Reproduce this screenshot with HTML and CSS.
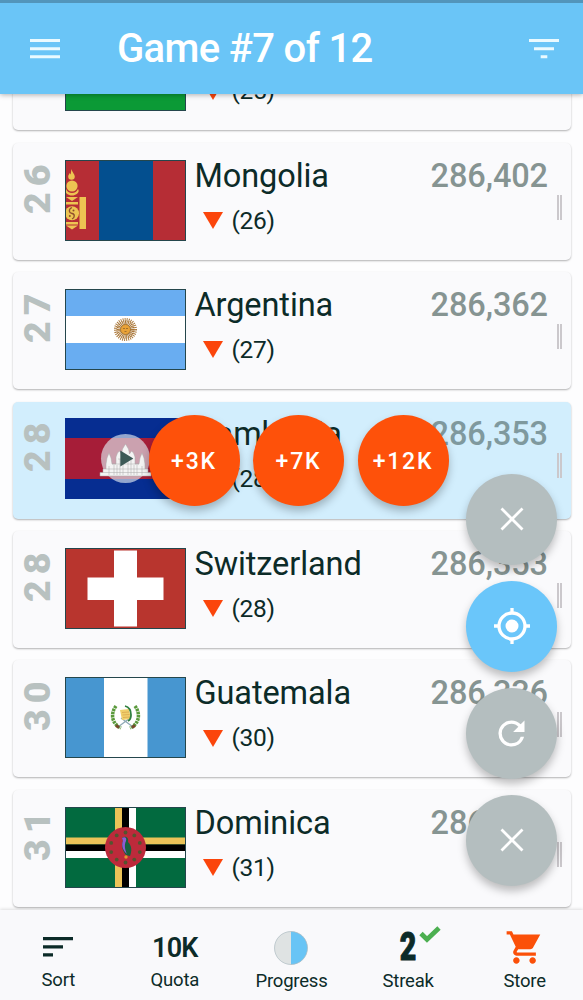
FILE: index.html
```
<!DOCTYPE html>
<html lang="en">
<head>
    <meta charset="UTF-8">
    <meta name="viewport" content="width=device-width, initial-scale=1.0">
    <title>Game #7 of 12</title>
    <link rel="stylesheet" href="styles.css">
</head>
<body>
    <header class="topbar">
        <svg class="menu-icon" viewBox="0 0 30 20" fill="#eafaff">
            <path d="M0 0h30v3H0zM0 8.2h30v3H0zM0 16.3h30v3H0z"></path>
        </svg>
        <h1 class="title">Game #7 of 12</h1>
        <svg class="filter-icon" viewBox="0 0 30 20" fill="#eafaff">
            <path d="M0 0h30v3H0zM5 8.2h20v3H5zM11.7 16.3h6.6v3h-6.6z"></path>
        </svg>
    </header>

    <main class="list">
        <div class="card">
            <div class="rank"></div>
            <svg class="flag" viewBox="0 0 121 81">
                <rect width="121" height="81" fill="#0b9a36"></rect>
                <rect class="frame" x=".5" y=".5" width="120" height="80"></rect>
            </svg>
            <div class="info">
                <div class="name"></div>
                <div class="change"><span class="down"></span>(25)</div>
            </div>
        </div>

        <div class="card">
            <div class="rank">26</div>
            <svg class="flag" viewBox="0 0 121 81">
                <rect width="121" height="81" fill="#b62d35"></rect>
                <rect x="34" width="54" height="81" fill="#034f8f"></rect>
                <!-- soyombo -->
                <g fill="#edc452">
                    <path d="M6.500 9c.3 3 3.300 5 3.300 7.500a3.300 3.300 0 0 1-6.600 0c0-1.500 1-2 1.400-3.500l1 1.500z"></path>
                    <circle cx="7" cy="26" r="5.600"></circle>
                    <path d="M1 29a6.500 6.500 0 0 0 12 0c2 3-1 6-6 6.500-5-.5-8-3.500-6-6.500z"></path>
                    <path d="M1 37h12l-6 4zM1 42h12v2.500H1zM1 62h12v2.500H1zM1 65.500h12l-6 4z"></path>
                    <circle cx="7" cy="53.300" r="7"></circle>
                    <path d="M14.500 37H21v32h-6.500z"></path>
                </g>
                <path d="M7 47.500c-4 2-3 5.500 0 6s3 4 0 5.500" fill="none" stroke="#8d4c2d" stroke-width="1.300"></path>
                <circle cx="8.500" cy="50.500" r="1" fill="#8d4c2d"></circle>
                <circle cx="4.800" cy="56" r="1" fill="#8d4c2d"></circle>
                <rect class="frame" x=".5" y=".5" width="120" height="80"></rect>
            </svg>
            <div class="info">
                <div class="name">Mongolia</div>
                <div class="change"><span class="down"></span>(26)</div>
            </div>
            <div class="score">286,402</div>
            <div class="handle"></div>
        </div>

        <div class="card">
            <div class="rank">27</div>
            <svg class="flag" viewBox="0 0 121 81">
                <rect width="121" height="81" fill="#69adf1"></rect>
                <rect y="27" width="121" height="27" fill="#fff"></rect>
                <!-- sun of May -->
                <circle cx="60.500" cy="40.500" r="6.500" fill="none" stroke="#a87434" stroke-width="5" stroke-dasharray=".9 .5"></circle>
                <circle cx="60.500" cy="40.500" r="10" fill="none" stroke="#a87434" stroke-width="3" stroke-dasharray=".9 1.100"></circle>
                <circle cx="60.500" cy="40.500" r="5" fill="#e9a238" stroke="#91652a" stroke-width=".7"></circle>
                <path d="M58 39.500h2m1 0h2M59.500 42.500h2" stroke="#91652a" stroke-width=".8"></path>
                <rect class="frame" x=".5" y=".5" width="120" height="80"></rect>
            </svg>
            <div class="info">
                <div class="name">Argentina</div>
                <div class="change"><span class="down"></span>(27)</div>
            </div>
            <div class="score">286,362</div>
            <div class="handle"></div>
        </div>

        <div class="card current">
            <div class="rank">28</div>
            <svg class="flag" viewBox="0 0 121 81">
                <rect width="121" height="81" fill="#062d91"></rect>
                <rect y="20" width="121" height="41" fill="#a61d38"></rect>
                <circle cx="60.500" cy="40.500" r="24.500" fill="#dfe8ef" fill-opacity=".65"></circle>
                <!-- Angkor Wat -->
                <path d="M35 58v-3.500h3V51h3v-5l1-6 2-5 2 5 1 6h4v-7l1.500-4 2-2 2 3 1-5 3-5 3 5 1 5 2-3 2 2 1.500 4v7h4l1-6 2-5 2 5 1 6v5h3v3.500h3V58z" fill="#f4f4f4" stroke="#aaa" stroke-width=".5"></path>
                <path d="M38 54.500h45M41 51h39M47 46h27M53 41h15M44 57v-9M49 57V47M52 57V47M55 57V41M58 57V38M63 57V38M66 57V41M69 57V47M72 57V47M77 57v-9" stroke="#aaa" stroke-width=".5" fill="none"></path>
                <path d="M55.300 32.500v16l13-8z" fill="#3d5a57"></path>
            </svg>
            <div class="info">
                <div class="name">Cambodia</div>
                <div class="change"><span class="down"></span>(28)</div>
            </div>
            <div class="score">286,353</div>
            <div class="handle"></div>
        </div>

        <div class="card">
            <div class="rank">28</div>
            <svg class="flag" viewBox="0 0 121 81">
                <rect width="121" height="81" fill="#b8352e"></rect>
                <path d="M49 2.500h23v27h26.500V52H72v26.500H49V52H22.500V29.500H49z" fill="#fff"></path>
                <rect class="frame" x=".5" y=".5" width="120" height="80"></rect>
            </svg>
            <div class="info">
                <div class="name">Switzerland</div>
                <div class="change"><span class="down"></span>(28)</div>
            </div>
            <div class="score">286,353</div>
            <div class="handle"></div>
        </div>

        <div class="card">
            <div class="rank">30</div>
            <svg class="flag" viewBox="0 0 121 81">
                <rect width="121" height="81" fill="#4796d0"></rect>
                <rect x="39" width="43.500" height="81" fill="#fff"></rect>
                <!-- wreath, rifles, scroll, quetzal -->
                <path d="M51 29c-6 8-4 18 5 22M70 29c6 8 4 18-5 22" fill="none" stroke="#5a9a3c" stroke-width="3.500" stroke-dasharray="2.500 .7"></path>
                <path d="M53 50l12-9M68 50l-12-9" stroke="#8fa9b5" stroke-width="1.300"></path>
                <path d="M51 48.500l3 2M70 48.500l-3 2" stroke="#78492c" stroke-width="3"></path>
                <path d="M55 33l9-1 2 10-9 1z" fill="#f0cf6c"></path>
                <path d="M57 35.500l7-.5M57.500 38l7-.5M58 40.500l7-.5" stroke="#d39b45" stroke-width=".6"></path>
                <path d="M60 29c4 1 6 5 6 9 0 3-1 5-3 6" fill="none" stroke="#2f8040" stroke-width="1.800"></path>
                <rect class="frame" x=".5" y=".5" width="120" height="80"></rect>
            </svg>
            <div class="info">
                <div class="name">Guatemala</div>
                <div class="change"><span class="down"></span>(30)</div>
            </div>
            <div class="score">286,336</div>
            <div class="handle"></div>
        </div>

        <div class="card">
            <div class="rank">31</div>
            <svg class="flag" viewBox="0 0 121 81">
                <rect width="121" height="81" fill="#026a3f"></rect>
                <path d="M50 0h7v81h-7zM0 30.500h121v7H0z" fill="#ebc358"></path>
                <path d="M64 0h7v81h-7zM0 44h121v7H0z" fill="#fff"></path>
                <path d="M57 0h7v81h-7zM0 37.500h121v6.500H0z" fill="#000"></path>
                <circle cx="60.500" cy="40.500" r="20.500" fill="#bd2a3b"></circle>
                <g fill="#54542f">
                    <circle cx="60.500" cy="25.500" r="1.900"></circle>
                    <circle cx="69.300" cy="28.400" r="1.900"></circle>
                    <circle cx="74.800" cy="35.900" r="1.900"></circle>
                    <circle cx="74.800" cy="45.100" r="1.900"></circle>
                    <circle cx="69.300" cy="52.600" r="1.900"></circle>
                    <circle cx="60.500" cy="55.500" r="1.900"></circle>
                    <circle cx="51.700" cy="52.600" r="1.900"></circle>
                    <circle cx="46.200" cy="45.100" r="1.900"></circle>
                    <circle cx="46.200" cy="35.900" r="1.900"></circle>
                    <circle cx="51.700" cy="28.400" r="1.900"></circle>
                </g>
                <path d="M57 31c4-3 7 0 6 4 4 4 4 9 2 14l-4-1c-4-5-5-10-3-14z" fill="#17623f"></path>
                <path d="M57 31c3-2 5 0 4 3-2 4-1 9 1 13-4-3-6-9-4-13z" fill="#8e5bd4"></path>
                <circle cx="61" cy="50" r="1.700" fill="#e39b2c"></circle>
                <rect class="frame" x=".5" y=".5" width="120" height="80"></rect>
            </svg>
            <div class="info">
                <div class="name">Dominica</div>
                <div class="change"><span class="down"></span>(31)</div>
            </div>
            <div class="score">286,230</div>
            <div class="handle"></div>
        </div>
    </main>

    <div class="boosts">
        <button class="fab orange">+3K</button>
        <button class="fab orange">+7K</button>
        <button class="fab orange">+12K</button>
    </div>

    <div class="actions">
        <button class="fab grey">
            <svg width="24" height="24" viewBox="0 0 24 24" fill="none" stroke="#fff" stroke-width="2.800"><path d="M1.500 1.500l21 21M22.500 1.500l-21 21"></path></svg>
        </button>
        <button class="fab blue">
            <svg width="38" height="38" viewBox="0 0 38 38" fill="none" stroke="#fff" stroke-width="3.300"><circle cx="19" cy="19" r="13"></circle><circle cx="19" cy="19" r="6.500" fill="#fff" stroke="none"></circle><path d="M19 1v6M19 31v6M1 19h6M31 19h6"></path></svg>
        </button>
        <button class="fab grey">
            <svg width="39" height="39" viewBox="0 0 24 24" fill="#fff"><path d="M17.650 6.350A7.958 7.958 0 0 0 12 4a8 8 0 1 0 7.730 10h-2.080A5.990 5.990 0 0 1 12 18a6 6 0 1 1 0-12c1.660 0 3.140.69 4.220 1.780L13 11h7V4l-2.350 2.350z"></path></svg>
        </button>
        <button class="fab grey">
            <svg width="24" height="24" viewBox="0 0 24 24" fill="none" stroke="#fff" stroke-width="2.800"><path d="M1.500 1.500l21 21M22.500 1.500l-21 21"></path></svg>
        </button>
    </div>

    <nav class="bottombar">
        <div class="tab">
            <div class="tab-icon">
                <svg width="30" height="20" viewBox="0 0 30 20" fill="#0c2b28"><path d="M0 0h30v3.300H0zM0 8.200h20v3.300H0zM0 16.300h10v3.300H0z"></path></svg>
            </div>
            <div class="label">Sort</div>
        </div>
        <div class="tab">
            <div class="tab-icon quota">10K</div>
            <div class="label">Quota</div>
        </div>
        <div class="tab low">
            <div class="tab-icon">
                <svg width="34" height="34" viewBox="0 0 34 34"><circle cx="17" cy="17" r="16.500" fill="#dfe3e3"></circle><path d="M17 .5a16.500 16.500 0 0 1 0 33z" fill="#68c4f5"></path><circle cx="17" cy="17" r="16.500" fill="none" stroke="#aebcc2" stroke-width=".7"></circle></svg>
            </div>
            <div class="label">Progress</div>
        </div>
        <div class="tab low">
            <div class="tab-icon">
                <span class="streak">2</span>
                <svg class="check" width="22" height="17" viewBox="0 0 22 17" fill="none" stroke="#4caf50" stroke-width="4.800"><path d="M2 7.500l6 6L20 2"></path></svg>
            </div>
            <div class="label">Streak</div>
        </div>
        <div class="tab low">
            <div class="tab-icon">
                <svg width="39" height="39" viewBox="0 0 24 24" fill="#fb5009"><path d="M7 18c-1.100 0-1.990.9-1.990 2S5.900 22 7 22s2-.9 2-2-.9-2-2-2zM1 2v2h2l3.600 7.590-1.350 2.450C4.520 15.370 5.480 17 7 17h12v-2H7.420a.25.25 0 0 1-.25-.25l.03-.12L8.100 13h7.450c.75 0 1.410-.41 1.750-1.030L21.700 4H5.210l-.94-2H1zm16 16c-1.100 0-1.990.9-1.990 2s.89 2 1.990 2 2-.9 2-2-.9-2-2-2z"></path></svg>
            </div>
            <div class="label">Store</div>
        </div>
    </nav>
</body>
</html>
```

FILE: styles.css
```
* {
    box-sizing: border-box;
}
body {
    margin: 0;
    height: 1000px;
    display: flex;
    flex-direction: column;
    position: relative;
    overflow: hidden;
    background-color: #fdfdfe;
    color: #0c2b28;
    font-family: Roboto, 'Liberation Sans', sans-serif;
}
.topbar {
    height: 94px;
    flex-shrink: 0;
    display: flex;
    align-items: center;
    padding: 1px 24px 0 30px;
    border-top: 3px solid #5295bb;
    background-color: #6ac5f7;
    box-shadow: 0 1px 5px rgba(0, 0, 0, 0.3);
    z-index: 1;
}
.menu-icon,
.filter-icon {
    width: 30px;
    height: 20px;
}
.title {
    flex: 1;
    margin: 0 0 0 57px;
    color: white;
    font-size: 40px;
    font-weight: 500;
    line-height: 48px;
    letter-spacing: -0.65px;
}
.list {
    flex: 1;
    min-height: 0;
    overflow: hidden;
    display: flex;
    flex-direction: column;
    justify-content: flex-end;
    gap: 12.4px;
    padding: 0 12px 3.2px 13px;
}
.card {
    height: 117px;
    flex-shrink: 0;
    display: flex;
    align-items: flex-start;
    padding-top: 16.7px;
    background-color: #fafafc;
    border-radius: 5px;
    box-shadow: 0 1px 2px rgba(0, 0, 0, 0.3);
}
.card.current {
    background-color: #d2eefd;
}
.rank {
    width: 52px;
    height: 54px;
    writing-mode: vertical-rl;
    transform: rotate(180deg);
    color: #b8c1c0;
    font-size: 37.5px;
    font-weight: 900;
    line-height: 48px;
    letter-spacing: 6px;
}
.flag {
    width: 121px;
    height: 81px;
    flex-shrink: 0;
}
.frame {
    fill: none;
    stroke: #24464c;
}
.info {
    flex: 1;
    padding-left: 8.5px;
}
.name {
    height: 45px;
    font-size: 32.5px;
    line-height: 32px;
    letter-spacing: -0.1px;
}
.change {
    display: flex;
    align-items: center;
    font-size: 24.5px;
    line-height: 32px;
    letter-spacing: -0.3px;
}
.down {
    margin: 0 9px 0 8px;
    border: 10px solid transparent;
    border-top: 17px solid #fb450b;
    border-bottom: 0;
}
.score {
    color: #869492;
    font-size: 32.5px;
    font-weight: 500;
    line-height: 32px;
    letter-spacing: -0.1px;
}
.current .score {
    color: #7f999e;
}
.handle {
    width: 5px;
    height: 25px;
    margin: 35px 9px 0 9px;
    border: 2px solid #cbc8cc;
    border-width: 0 2px;
}
.boosts {
    position: absolute;
    left: 148.5px;
    top: 415px;
    display: flex;
    gap: 13.5px;
}
.actions {
    position: absolute;
    left: 466px;
    top: 473.5px;
    display: flex;
    flex-direction: column;
    gap: 16px;
}
.fab {
    width: 91px;
    height: 91px;
    display: flex;
    align-items: center;
    justify-content: center;
    padding: 0;
    border: none;
    border-radius: 50%;
    color: white;
    font-family: inherit;
    font-size: 23px;
    font-weight: 500;
    letter-spacing: 1.8px;
    box-shadow: 0 5px 9px rgba(0, 0, 0, 0.25);
}
.orange {
    padding-top: 2px;
    background-color: #fe510a;
}
.grey {
    background-color: #b4bebf;
}
.blue {
    background-color: #6ac6fa;
}
.bottombar {
    height: 90px;
    flex-shrink: 0;
    display: grid;
    grid-template-columns: repeat(5, 1fr);
    background-color: #f9f9fb;
    box-shadow: 0 -1px 3px rgba(0, 0, 0, 0.12);
}
.tab {
    padding-top: 15px;
    text-align: center;
}
.tab.low {
    padding-top: 16px;
}
.tab-icon {
    height: 43px;
    display: flex;
    align-items: center;
    justify-content: center;
    position: relative;
}
.quota {
    padding-top: 2px;
    font-size: 27px;
    font-weight: 600;
    letter-spacing: -0.8px;
}
.streak {
    font-size: 38px;
    font-weight: 900;
    line-height: 40px;
    padding-bottom: 2px;
    transform: scaleX(0.75);
    -webkit-text-stroke: 1px #0c2b28;
}
.check {
    position: absolute;
    left: 69px;
    top: 0;
}
.label {
    padding-top: 1px;
    font-size: 18.5px;
    line-height: 22px;
    letter-spacing: -0.2px;
}
```
